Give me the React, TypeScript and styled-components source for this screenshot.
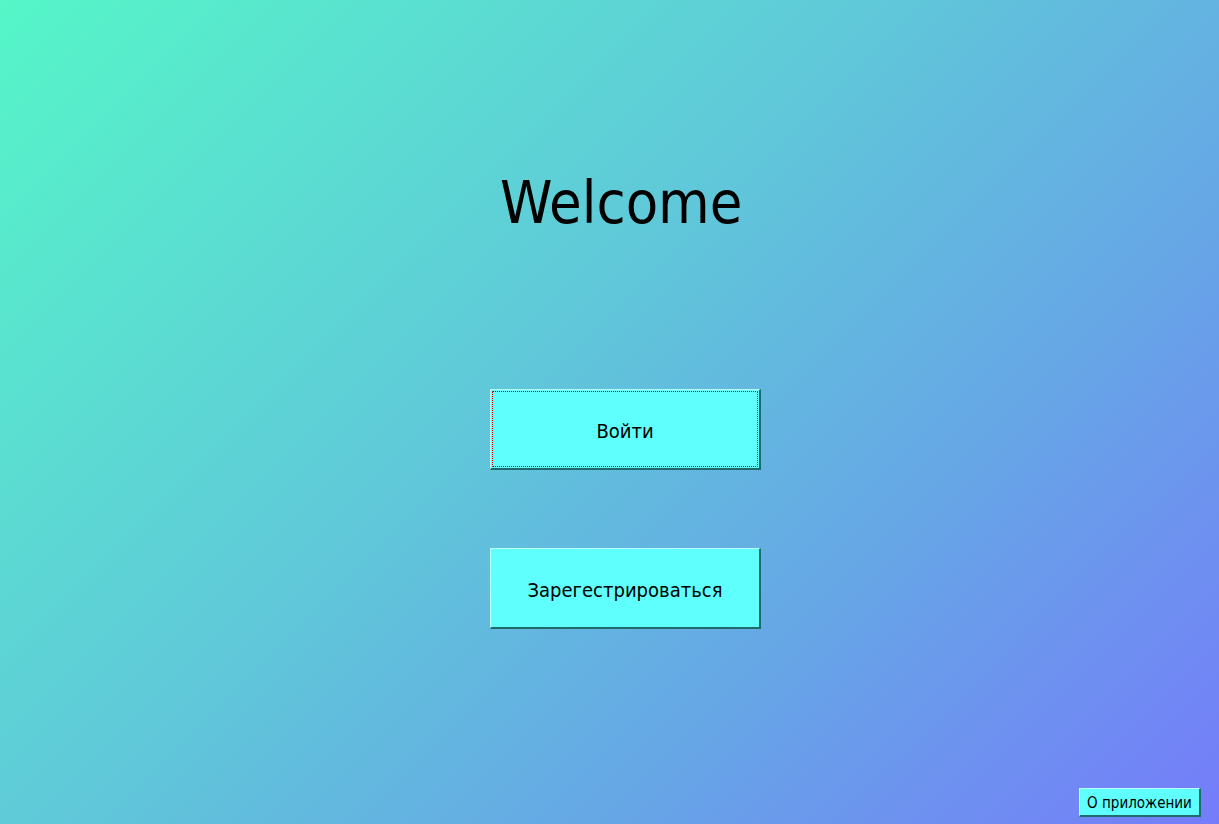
import React from "react";
import styled, { createGlobalStyle } from "styled-components";

const Global = createGlobalStyle`
  html, body { margin: 0; padding: 0; }
  body { font-family: "DejaVu Sans Condensed", "DejaVu Sans", sans-serif; }
`;

const Page = styled.div`
  width: 1219px;
  height: 824px;
  box-sizing: border-box;
  background: linear-gradient(135deg, #55f6c8 0%, #60c6da 45%, #66a6e6 70%, #757cfa 100%);
  display: grid;
  grid-template-rows: 167px 222px 80px 79px 81px 1fr auto;
  justify-items: start;
  padding: 0 18px 7px 490px;
`;

const Title = styled.h1`
  grid-row: 2;
  margin: 0 0 0 10px;
  align-self: start;
  font-family: "DejaVu Sans Condensed", "DejaVu Sans", sans-serif;
  font-weight: 400;
  font-size: 59px;
  line-height: 72px;
  color: #000;
`;

const MainButton = styled.button<{ $row: number; $focused?: boolean }>`
  grid-row: ${(p) => p.$row};
  position: relative;
  width: 271px;
  height: 81px;
  box-sizing: border-box;
  background: #5ffffe;
  border-style: solid;
  border-width: 1px 2px 2px 1px;
  border-color: #b8ffff #1f6a6a #1f6a6a #b8ffff;
  font-family: "DejaVu Sans Condensed", "DejaVu Sans", sans-serif;
  font-size: 20px;
  color: #000;
  padding: 3px 0 0 0;
  &::after {
    content: "";
    display: ${(p) => (p.$focused ? "block" : "none")};
    position: absolute;
    inset: 1px;
    border: 1px dotted;
    border-color: #222 #e00000 #222 #e00000;
  }
`;

const Footer = styled.div`
  grid-row: 7;
  justify-self: end;
`;

const SmallButton = styled.button`
  width: 122px;
  height: 29px;
  box-sizing: border-box;
  background: #5ffffe;
  border-style: solid;
  border-width: 1px 2px 2px 1px;
  border-color: #b8ffff #1f6a6a #1f6a6a #b8ffff;
  font-family: "DejaVu Sans Condensed", "DejaVu Sans", sans-serif;
  font-size: 15px;
  color: #000;
  padding: 1px 0 0 0;
`;

export default function App() {
  return (
    <>
      <Global />
      <Page>
        <Title>Welcome</Title>
        <MainButton $row={3} $focused>Войти</MainButton>
        <MainButton $row={5}>Зарегестрироваться</MainButton>
        <Footer>
          <SmallButton>О приложении</SmallButton>
        </Footer>
      </Page>
    </>
  );
}
